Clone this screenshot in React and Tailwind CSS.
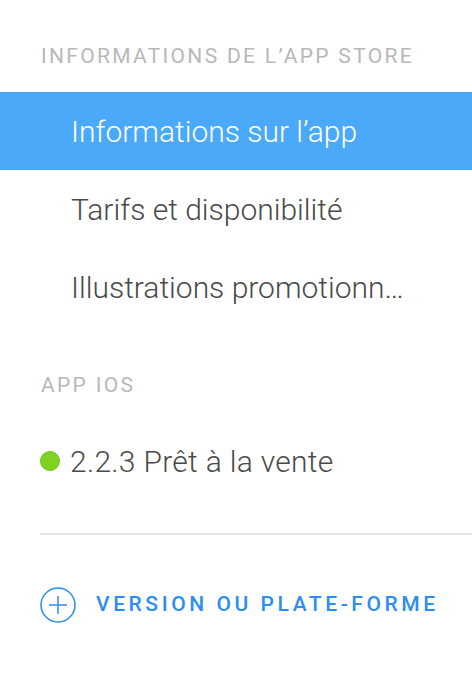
import { useState } from "react";

const items = [
  "Informations sur l’app",
  "Tarifs et disponibilité",
  "Illustrations promotionnelles",
];

const App = () => {
  const [active, setActive] = useState(0);

  return (
    <div className="w-[472px] h-[676px] bg-white overflow-hidden font-['Roboto',sans-serif]">
      {/* App Store section */}
      <div className="pt-[45px]">
        <h3 className="pl-[41px] text-[21px] leading-[22px] tracking-[0.11em] text-[#b8b8b8] h-[47px] whitespace-nowrap">
          INFORMATIONS DE L’APP STORE
        </h3>
        <ul className="flex flex-col">
          {items.map((item, i) => (
            <li
              key={item}
              onClick={() => setActive(i)}
              className={`h-[78px] flex items-center pl-[71px] pr-[58px] text-[30px] font-light cursor-pointer ${
                active === i ? "bg-[#4ba9fa] text-white" : "text-[#4a4a4a]"
              }`}
            >
              <span className="truncate" title={item}>{item}</span>
            </li>
          ))}
        </ul>
      </div>

      {/* iOS section */}
      <div className="pt-[48px]">
        <h3 className="pl-[41px] text-[21px] leading-[22px] tracking-[0.11em] text-[#b8b8b8]">
          APP IOS
        </h3>
        <div className="flex items-center gap-[10px] pl-[40px] h-[78px] mt-[26px]">
          <span className="w-[20px] h-[20px] rounded-full bg-[#7ed321] border border-[#6fbf1c]" />
          <span className="text-[30px] font-light tracking-[0.01em] text-[#4a4a4a]">2.2.3 Prêt à la vente</span>
        </div>
      </div>

      <div className="ml-[40px] mt-[33px] h-[2px] bg-[#e3e3e3]" />

      <button className="flex items-center gap-[20px] pl-[40px] mt-[52px]">
        <svg width="36" height="36" viewBox="0 0 36 36" fill="none" stroke="#2b8ef0" strokeWidth="1.5">
          <circle cx="18" cy="18" r="17" />
          <path d="M18 9v18M9 18h18" />
        </svg>
        <span className="text-[21px] font-medium tracking-[0.17em] text-[#2b8ef0] whitespace-nowrap">
          VERSION OU PLATE-FORME
        </span>
      </button>
    </div>
  );
};

export default App;
